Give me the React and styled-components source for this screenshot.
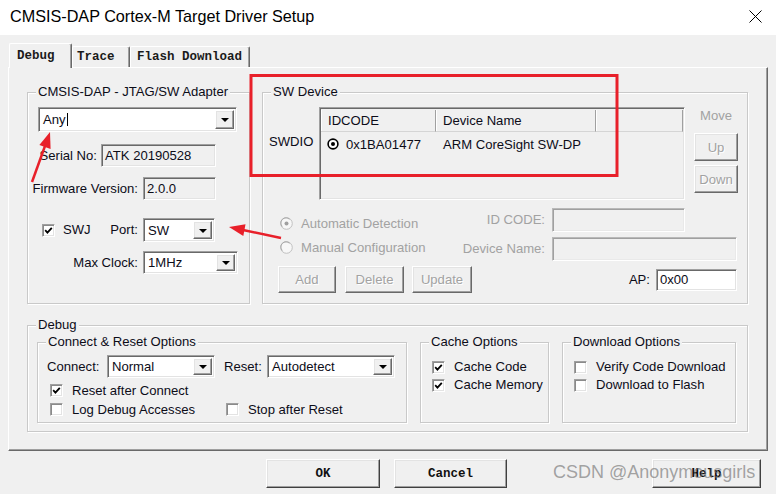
import React from 'react';
import styled, { createGlobalStyle, css } from 'styled-components';

const GlobalStyle = createGlobalStyle`
  html, body { margin: 0; padding: 0; background: #f0f0f0; }
  body { font-family: "Liberation Sans", Arial, sans-serif; }
  * { box-sizing: border-box; }
`;

const sunken = css`
  border-style: solid;
  border-width: 1px;
  border-color: #a0a0a0 #ffffff #ffffff #a0a0a0;
  box-shadow: inset 1px 1px #696969, inset -1px -1px #e3e3e3;
`;
const raised = css`
  border-style: solid;
  border-width: 1px;
  border-color: #ffffff #696969 #696969 #ffffff;
  box-shadow: inset -1px -1px #a0a0a0, inset 1px 1px #e3e3e3;
`;
const px = (v) => (typeof v === 'number' ? `${v}px` : v);

const Window = styled.div`
  position: relative;
  width: 776px;
  height: 494px;
  background: #f0f0f0;
  display: flex;
  flex-direction: column;
  overflow: hidden;
  font-family: "Liberation Sans", Arial, sans-serif;
  font-size: 13.1px;
  color: #0c0c18;
`;

const TitleBar = styled.div`
  height: 35px;
  flex: none;
  background: #ffffff;
  display: flex;
  align-items: center;
  justify-content: space-between;
  padding: 0 14px 3px 10px;
`;
const Title = styled.div`
  font-size: 16.2px;
  color: #000;
`;

const TabRow = styled.div`
  display: flex;
  align-items: flex-end;
  height: 24px;
  margin-top: 8px;
  padding-left: 9px;
  position: relative;
  z-index: 1;
`;
const Tab = styled.div`
  width: ${(p) => p.$w}px;
  height: ${(p) => (p.$active ? 25 : 21)}px;
  margin-bottom: ${(p) => (p.$active ? -1 : 0)}px;
  padding-left: ${(p) => p.$pl}px;
  display: flex;
  align-items: center;
  font-family: "Liberation Mono", "Courier New", monospace;
  font-weight: 700;
  font-size: 12.5px;
  color: #1a1a1a;
  background: #f0f0f0;
  border-top: 1px solid #ffffff;
  border-left: 1px solid #ffffff;
  border-right: 1px solid #696969;
  box-shadow: inset -1px 0 #a0a0a0;
  border-radius: 2px 2px 0 0;
`;

const Panel = styled.div`
  flex: none;
  margin: 0 8px;
  height: 384px;
  border-top: 1px solid #ffffff;
  border-left: 1px solid #ffffff;
  border-right: 1px solid #696969;
  border-bottom: 1px solid #696969;
  box-shadow: inset -1px -1px #a0a0a0;
  padding: 24px 19px 0 18px;
`;

const TopRow = styled.div`
  display: flex;
  gap: 12px;
`;

const Group = styled.div`
  position: relative;
  flex: none;
  width: ${(p) => p.$w}px;
  height: ${(p) => p.$h}px;
  margin-top: ${(p) => p.$mt || 0}px;
  margin-left: ${(p) => p.$ml || 0}px;
  padding: ${(p) => p.$pt || 0}px 0 0 ${(p) => p.$pl || 0}px;
  display: flex;
  flex-direction: ${(p) => (p.$row ? 'row' : 'column')};
  align-items: flex-start;
  border: 1px solid #c9c9c9;
  box-shadow: inset 1px 1px #ffffff, 1px 1px #ffffff;
`;
const Legend = styled.span`
  position: absolute;
  top: -9px;
  left: 8px;
  padding: 0 2px;
  line-height: 16px;
  background: #f0f0f0;
  white-space: nowrap;
`;

const Row = styled.div`
  display: flex;
  align-items: center;
  flex: none;
  height: ${(p) => px(p.$h || 'auto')};
  margin-top: ${(p) => p.$mt || 0}px;
  padding-left: ${(p) => p.$pl || 0}px;
  width: ${(p) => (p.$w ? `${p.$w}px` : 'auto')};
`;

const Label = styled.span`
  flex: none;
  white-space: nowrap;
  line-height: 16px;
  ${(p) => p.$w && `width: ${p.$w}px;`}
  margin-left: ${(p) => px(p.$ml || 0)};
  text-align: ${(p) => (p.$right ? 'right' : 'left')};
  color: ${(p) => (p.$disabled ? '#a2a2a2' : 'inherit')};
`;

const FieldBox = styled.div`
  flex: none;
  width: ${(p) => p.$w}px;
  height: ${(p) => p.$h}px;
  margin-left: ${(p) => p.$ml || 0}px;
  background: ${(p) => (p.$white ? '#ffffff' : '#f0f0f0')};
  ${sunken};
  ${(p) =>
    p.$disabled &&
    css`
      border-color: #b9b9b9 #ffffff #ffffff #b9b9b9;
      box-shadow: inset 1px 1px #a0a0a0, inset -1px -1px #e9e9e9;
    `}
  display: flex;
  align-items: center;
  padding-left: 3px;
  white-space: nowrap;
`;

const ComboBox = styled.div`
  flex: none;
  width: ${(p) => p.$w}px;
  height: ${(p) => p.$h}px;
  margin-left: ${(p) => p.$ml || 0}px;
  background: #ffffff;
  ${sunken};
  display: flex;
  align-items: stretch;
  padding: 2px;
`;
const ComboText = styled.span`
  flex: 1;
  display: flex;
  align-items: center;
  padding-left: 2px;
  white-space: nowrap;
`;
const Caret = styled.span`
  width: 1px;
  height: 13px;
  background: #000;
  align-self: center;
  margin-left: 1px;
`;
const DropButton = styled.span`
  flex: none;
  width: 19px;
  background: #f0f0f0;
  ${raised};
  display: flex;
  align-items: center;
  justify-content: center;
  &::after {
    content: '';
    border-left: 4px solid transparent;
    border-right: 4px solid transparent;
    border-top: 4px solid #000;
    margin-top: 1px;
  }
`;

const CheckBox = styled.span`
  flex: none;
  width: 13px;
  height: 13px;
  margin-left: ${(p) => p.$ml || 0}px;
  background: #ffffff;
  ${sunken};
  box-shadow: inset 1px 1px #8a8a8a, inset -1px -1px #e3e3e3;
  display: flex;
  align-items: center;
  justify-content: center;
`;

const Inline = styled.div`
  flex: none;
  display: flex;
  align-items: center;
  width: ${(p) => p.$w}px;
  padding-left: ${(p) => p.$pl || 0}px;
`;

const Button = styled.div`
  flex: none;
  width: ${(p) => p.$w}px;
  height: ${(p) => p.$h}px;
  margin-left: ${(p) => px(p.$ml || 0)};
  margin-top: ${(p) => p.$mt || 0}px;
  background: #f0f0f0;
  ${raised};
  display: flex;
  align-items: center;
  justify-content: center;
  color: ${(p) => (p.$disabled ? '#a2a2a2' : '#111')};
  text-shadow: ${(p) => (p.$disabled ? '1px 1px #ffffff' : 'none')};
  ${(p) =>
    p.$mono &&
    css`
      font-family: "Liberation Mono", "Courier New", monospace;
      font-weight: 700;
      font-size: 12.5px;
      border-color: #ffffff #404040 #404040 #ffffff;
      box-shadow: inset -1px -1px #a0a0a0, inset 1px 1px #e3e3e3;
    `}
`;

const DeviceTop = styled.div`
  display: flex;
  align-items: flex-start;
`;
const SideLabel = styled.div`
  width: 56px;
  padding: 27px 0 0 6px;
  line-height: 16px;
`;
const Table = styled.div`
  width: 366px;
  height: 93px;
  flex: none;
  background: #f0f0f0;
  ${sunken};
  padding: 2px 1px 0 1px;
  display: flex;
  flex-direction: column;
`;
const HeaderRow = styled.div`
  display: flex;
  height: 22px;
  flex: none;
`;
const HeaderCell = styled.div`
  flex: ${(p) => (p.$w ? `none` : '1')};
  width: ${(p) => (p.$w ? `${p.$w}px` : 'auto')};
  padding-left: 7px;
  display: flex;
  align-items: center;
  background: #f0f0f0;
  border-right: 1px solid #a0a0a0;
  border-bottom: 1px solid #d5d5d5;
  box-shadow: inset 1px 0 #ffffff;
`;
const DataRow = styled.div`
  display: flex;
  height: 24px;
  align-items: center;
`;
const DataCell = styled.div`
  width: ${(p) => p.$w}px;
  padding-left: ${(p) => p.$pl}px;
  display: flex;
  align-items: center;
  gap: 7px;
  white-space: nowrap;
`;
const MoveCol = styled.div`
  width: 44px;
  margin-left: 9px;
  display: flex;
  flex-direction: column;
  align-items: center;
`;
const MoveLabel = styled.div`
  margin-top: 1px;
  line-height: 16px;
  color: #a2a2a2;
`;

const Lower = styled.div`
  display: flex;
  margin-top: 8px;
`;
const RadioCol = styled.div`
  width: 187px;
  flex: none;
  padding: 3px 0 0 17px;
  display: flex;
  flex-direction: column;
`;
const RadioRow = styled.div`
  height: 24px;
  display: flex;
  align-items: center;
  gap: 8px;
  color: #a2a2a2;
`;
const FieldCol = styled.div`
  display: flex;
  flex-direction: column;
  gap: 5px;
`;
const BottomBar = styled.div`
  display: flex;
  align-items: center;
  width: 100%;
  margin-top: 5px;
  padding: 0 10px 0 15px;
`;

const ButtonRow = styled.div`
  display: flex;
  margin-top: 8px;
  padding: 0 15px 0 266px;
`;

const Watermark = styled.div`
  position: absolute;
  left: 553px;
  top: 461px;
  font-family: "Liberation Sans", Arial, sans-serif;
  font-size: 18px;
  line-height: 22px;
  color: rgba(110, 110, 110, 0.62);
  white-space: nowrap;
  pointer-events: none;
`;
const Overlay = styled.svg`
  position: absolute;
  left: 0;
  top: 0;
  pointer-events: none;
`;

const Combo = ({ w, h, ml, children, caret }) => (
  <ComboBox $w={w} $h={h} $ml={ml}>
    <ComboText>
      {children}
      {caret && <Caret />}
    </ComboText>
    <DropButton />
  </ComboBox>
);

const Check = ({ checked, ml }) => (
  <CheckBox $ml={ml}>
    {checked && (
      <svg width="9" height="9" viewBox="0 0 9 9">
        <path d="M1.2 4.2 L3.4 6.6 L7.8 1.8" fill="none" stroke="#000" strokeWidth="1.8" />
      </svg>
    )}
  </CheckBox>
);

const CheckLine = ({ checked, children, w, ml }) => (
  <Inline $w={w} $pl={ml}>
    <Check checked={checked} />
    <Label $ml={9}>{children}</Label>
  </Inline>
);

const DisabledRadio = ({ selected }) => (
  <svg width="13" height="13" viewBox="0 0 13 13">
    <circle cx="6.5" cy="6.5" r="5.8" fill="#f7f7f7" stroke="#c0c0c0" strokeWidth="1" />
    <path d="M2.3 9.5 A5 5 0 0 1 9.5 2.3" fill="none" stroke="#a8a8a8" strokeWidth="1" />
    {selected && <circle cx="6.5" cy="6.5" r="2" fill="#a0a0a0" />}
  </svg>
);

const SelRadio = () => (
  <svg width="12" height="12" viewBox="0 0 12 12">
    <circle cx="6" cy="6" r="4.9" fill="#fff" stroke="#000" strokeWidth="1.6" />
    <circle cx="6" cy="6" r="2" fill="#000" />
  </svg>
);

export default function App() {
  return (
    <>
      <GlobalStyle />
      <Window>
        <TitleBar>
          <Title>CMSIS-DAP Cortex-M Target Driver Setup</Title>
          <svg width="13" height="13" viewBox="0 0 13 13">
            <path d="M0.5 0.5 L12.5 12.5 M12.5 0.5 L0.5 12.5" stroke="#000" strokeWidth="1" />
          </svg>
        </TitleBar>

        <TabRow>
          <Tab $active $w={63} $pl={7}>Debug</Tab>
          <Tab $w={58} $pl={4}>Trace</Tab>
          <Tab $w={120} $pl={6}>Flash Download</Tab>
        </TabRow>

        <Panel>
          <TopRow>
            <Group $w={223} $h={212} $pt={14}>
              <Legend>CMSIS-DAP - JTAG/SW Adapter</Legend>
              <Row $pl={10}>
                <Combo w={199} h={25} caret>Any</Combo>
              </Row>
              <Row $mt={12}>
                <Label $w={69} $right>Serial No:</Label>
                <FieldBox $w={115} $h={23} $ml={4}>ATK 20190528</FieldBox>
              </Row>
              <Row $mt={10}>
                <Label $w={110} $right>Firmware Version:</Label>
                <FieldBox $w={73} $h={23} $ml={5}>2.0.0</FieldBox>
              </Row>
              <Row $mt={18}>
                <Inline $w={110} $pl={14}>
                  <Check checked />
                  <Label $ml={8}>SWJ</Label>
                  <Label $ml="auto">Port:</Label>
                </Inline>
                <Combo w={72} h={24} ml={5}>SW</Combo>
              </Row>
              <Row $mt={9}>
                <Label $w={110} $right>Max Clock:</Label>
                <Combo w={95} h={23} ml={5}>1MHz</Combo>
              </Row>
            </Group>

            <Group $w={486} $h={212} $pt={14}>
              <Legend>SW Device</Legend>
              <DeviceTop>
                <SideLabel>SWDIO</SideLabel>
                <Table>
                  <HeaderRow>
                    <HeaderCell $w={115}>IDCODE</HeaderCell>
                    <HeaderCell $w={160}>Device Name</HeaderCell>
                    <HeaderCell />
                  </HeaderRow>
                  <DataRow>
                    <DataCell $w={115} $pl={6}>
                      <SelRadio />
                      <span>0x1BA01477</span>
                    </DataCell>
                    <DataCell $w={200} $pl={7}>ARM CoreSight SW-DP</DataCell>
                  </DataRow>
                </Table>
                <MoveCol>
                  <MoveLabel>Move</MoveLabel>
                  <Button $w={44} $h={28} $mt={9} $disabled>Up</Button>
                  <Button $w={44} $h={28} $mt={4} $disabled>Down</Button>
                </MoveCol>
              </DeviceTop>

              <Lower>
                <RadioCol>
                  <RadioRow>
                    <DisabledRadio selected />
                    <span>Automatic Detection</span>
                  </RadioRow>
                  <RadioRow>
                    <DisabledRadio />
                    <span>Manual Configuration</span>
                  </RadioRow>
                </RadioCol>
                <FieldCol>
                  <Row>
                    <Label $w={95} $right $disabled>ID CODE:</Label>
                    <FieldBox $w={133} $h={24} $ml={7} $disabled />
                  </Row>
                  <Row>
                    <Label $w={95} $right $disabled>Device Name:</Label>
                    <FieldBox $w={185} $h={24} $ml={7} $disabled />
                  </Row>
                </FieldCol>
              </Lower>

              <BottomBar>
                <Button $w={58} $h={27} $disabled>Add</Button>
                <Button $w={59} $h={27} $ml={9} $disabled>Delete</Button>
                <Button $w={60} $h={27} $ml={8} $disabled>Update</Button>
                <Label $ml="auto">AP:</Label>
                <FieldBox $w={81} $h={22} $ml={6} $white>0x00</FieldBox>
              </BottomBar>
            </Group>
          </TopRow>

          <Group $w={721} $h={107} $mt={21} $pt={16} $pl={9} $row>
            <Legend>Debug</Legend>
            <Group $w={370} $h={81} $pt={12}>
              <Legend>Connect &amp; Reset Options</Legend>
              <Row $pl={9}>
                <Label $w={60}>Connect:</Label>
                <Combo w={108} h={23}>Normal</Combo>
                <Label $w={43} $ml={9}>Reset:</Label>
                <Combo w={128} h={23}>Autodetect</Combo>
              </Row>
              <Row $mt={3} $h={19}>
                <CheckLine checked ml={12} w={200}>Reset after Connect</CheckLine>
              </Row>
              <Row $h={19}>
                <CheckLine ml={12} w={188}>Log Debug Accesses</CheckLine>
                <CheckLine w={160}>Stop after Reset</CheckLine>
              </Row>
            </Group>

            <Group $w={129} $h={81} $ml={13} $pt={15}>
              <Legend>Cache Options</Legend>
              <Row $h={18}>
                <CheckLine checked ml={11} w={125}>Cache Code</CheckLine>
              </Row>
              <Row $h={18}>
                <CheckLine checked ml={11} w={125}>Cache Memory</CheckLine>
              </Row>
            </Group>

            <Group $w={174} $h={81} $ml={13} $pt={15}>
              <Legend>Download Options</Legend>
              <Row $h={18}>
                <CheckLine ml={11} w={170}>Verify Code Download</CheckLine>
              </Row>
              <Row $h={18}>
                <CheckLine ml={11} w={170}>Download to Flash</CheckLine>
              </Row>
            </Group>
          </Group>
        </Panel>

        <ButtonRow>
          <Button $w={114} $h={29} $mono>OK</Button>
          <Button $w={113} $h={29} $ml={14} $mono>Cancel</Button>
          <Button $w={109} $h={29} $ml="auto" $mono>Help</Button>
        </ButtonRow>

        <Watermark>CSDN @Anonymousgirls</Watermark>

        <Overlay width="776" height="494" viewBox="0 0 776 494">
          <rect x="251" y="75.5" width="366" height="100" fill="none" stroke="#e8202a" strokeWidth="3" />
          <line x1="32" y1="182" x2="45" y2="146" stroke="#e8202a" strokeWidth="2.5" />
          <polygon points="50,132 50.6,149 39.4,145" fill="#e8202a" />
          <line x1="281" y1="238" x2="243" y2="230" stroke="#e8202a" strokeWidth="2.5" />
          <polygon points="229,227 245.5,224.2 243.3,236" fill="#e8202a" />
        </Overlay>
      </Window>
    </>
  );
}
